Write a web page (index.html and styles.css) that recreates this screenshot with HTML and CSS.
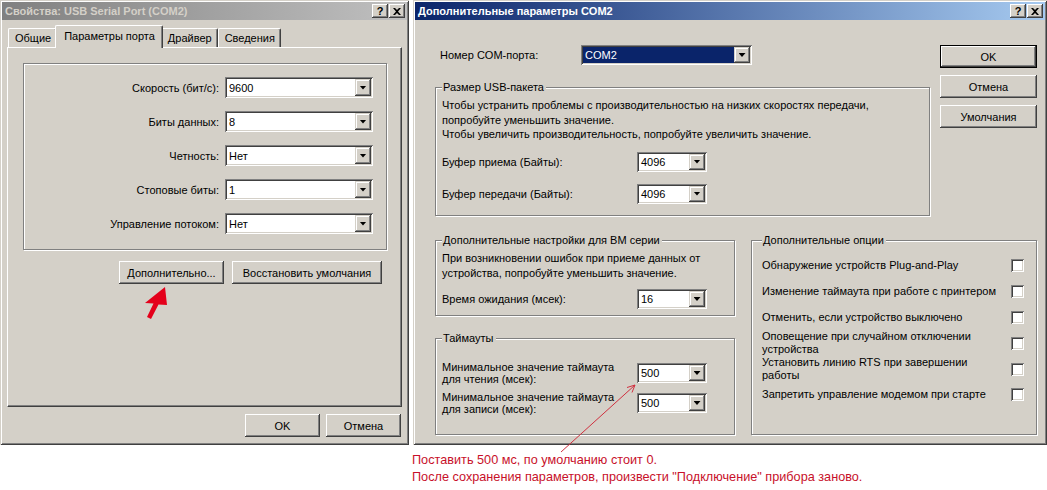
FILE: index.html
```html
<!DOCTYPE html>
<html lang="ru">
<head>
<meta charset="utf-8">
<title>USB Serial Port</title>
<link rel="stylesheet" href="styles.css">
</head>
<body>
<div class="desk">
  <div class="windows">
    <section class="win win-props">
      <div class="titlebar inactive">
        <span class="title">Свойства: USB Serial Port (COM2)</span>
        <span class="tbtns">
          <span class="tbtn">?</span>
          <span class="tbtn"><svg width="8" height="7" viewBox="0 0 8 7"><path d="M0 0h2l2 2 2-2h2L5 3.5 8 7H6L4 5 2 7H0l3-3.5z" fill="#000"/></svg></span>
        </span>
      </div>
      <div class="tabs">
        <div class="tab">Общие</div>
        <div class="tab active">Параметры порта</div>
        <div class="tab">Драйвер</div>
        <div class="tab">Сведения</div>
      </div>
      <div class="tabpanel">
        <div class="etched portgroup">
          <div class="prow"><span>Скорость (бит/с):</span><div class="combo c-port"><span class="val">9600</span><span class="drop"></span></div></div>
          <div class="prow"><span>Биты данных:</span><div class="combo c-port"><span class="val">8</span><span class="drop"></span></div></div>
          <div class="prow"><span>Четность:</span><div class="combo c-port"><span class="val">Нет</span><span class="drop"></span></div></div>
          <div class="prow"><span>Стоповые биты:</span><div class="combo c-port"><span class="val">1</span><span class="drop"></span></div></div>
          <div class="prow"><span>Управление потоком:</span><div class="combo c-port"><span class="val">Нет</span><span class="drop"></span></div></div>
        </div>
        <div class="panel-btns">
          <button class="btn b-more">Дополнительно...</button>
          <button class="btn b-restore">Восстановить умолчания</button>
        </div>
      </div>
      <div class="dlg-btns">
        <button class="btn b-dlg">OK</button>
        <button class="btn b-dlg">Отмена</button>
      </div>
    </section>

    <section class="win win-adv">
      <div class="titlebar active">
        <span class="title">Дополнительные параметры COM2</span>
        <span class="tbtns">
          <span class="tbtn">?</span>
          <span class="tbtn"><svg width="8" height="7" viewBox="0 0 8 7"><path d="M0 0h2l2 2 2-2h2L5 3.5 8 7H6L4 5 2 7H0l3-3.5z" fill="#000"/></svg></span>
        </span>
      </div>
      <div class="adv-body">
        <div class="adv-top">
          <div class="adv-main">
            <div class="com-row">
              <span class="com-lbl">Номер COM-порта:</span>
              <div class="combo c-com"><span class="val sel">COM2</span><span class="drop"></span></div>
            </div>
            <div class="etched group g-usb">
              <span class="legend">Размер USB-пакета</span>
              <p class="desc">Чтобы устранить проблемы с производительностью на низких скоростях передачи,<br>попробуйте уменьшить значение.<br>Чтобы увеличить производительность, попробуйте увеличить значение.</p>
              <div class="frow r-buf1"><span class="flbl">Буфер приема (Байты):</span><div class="combo c-small"><span class="val">4096</span><span class="drop"></span></div></div>
              <div class="frow r-buf2"><span class="flbl">Буфер передачи (Байты):</span><div class="combo c-small"><span class="val">4096</span><span class="drop"></span></div></div>
            </div>
          </div>
          <div class="side-btns">
            <button class="btn default">OK</button>
            <button class="btn">Отмена</button>
            <button class="btn">Умолчания</button>
          </div>
        </div>
        <div class="adv-bottom">
          <div class="col-a">
            <div class="etched group g-bm">
              <span class="legend">Дополнительные настройки для BM серии</span>
              <p class="desc">При возникновении ошибок при приеме данных от<br>устройства, попробуйте уменьшить значение.</p>
              <div class="frow r-wait"><span class="flbl">Время ожидания (мсек):</span><div class="combo c-small"><span class="val">16</span><span class="drop"></span></div></div>
            </div>
            <div class="etched group g-to">
              <span class="legend">Таймауты</span>
              <div class="frow r-to"><span class="flbl two">Минимальное значение таймаута<br>для чтения (мсек):</span><div class="combo c-small"><span class="val">500</span><span class="drop"></span></div></div>
              <div class="frow r-to"><span class="flbl two">Минимальное значение таймаута<br>для записи (мсек):</span><div class="combo c-small"><span class="val">500</span><span class="drop"></span></div></div>
            </div>
          </div>
          <div class="etched group g-opt">
            <span class="legend">Дополнительные опции</span>
            <div class="opts">
              <div class="opt"><span>Обнаружение устройств Plug-and-Play</span><span class="chk"></span></div>
              <div class="opt"><span>Изменение таймаута при работе с принтером</span><span class="chk"></span></div>
              <div class="opt"><span>Отменить, если устройство выключено</span><span class="chk"></span></div>
              <div class="opt"><span>Оповещение при случайном отключении<br>устройства</span><span class="chk"></span></div>
              <div class="opt"><span>Установить линию RTS при завершении<br>работы</span><span class="chk"></span></div>
              <div class="opt"><span>Запретить управление модемом при старте</span><span class="chk"></span></div>
            </div>
          </div>
        </div>
      </div>
    </section>
  </div>
  <div class="note">
    <p>Поставить 500 мс, по умолчанию стоит 0.</p>
    <p>После сохранения параметров, произвести "Подключение" прибора заново.</p>
  </div>
</div>
<svg class="annot" width="1047" height="490" viewBox="0 0 1047 490">
  <polygon points="165,287 167,305 158.5,304.5 151,319 147,317 153.5,303.5 145,303" fill="#e4001b"/>
  <path d="M561 452 L635 385 M627 387.5 L635 385 L632 392.5" stroke="#d0303f" stroke-width="1" fill="none"/>
</svg>
</body>
</html>
```

FILE: styles.css
```css
* { box-sizing: border-box; }

body {
  margin: 0;
  width: 1047px;
  height: 490px;
  overflow: hidden;
  position: relative;
  background: #fff;
  color: #000;
  font-family: "Liberation Sans", Arial, sans-serif;
  font-size: 11px;
}

p { margin: 0; }

.desk { display: flex; flex-direction: column; }

.windows { display: flex; gap: 4px; align-items: flex-start; }

.win {
  height: 445px;
  padding: 2px;
  background: #d4d0c8;
  display: flex;
  flex-direction: column;
  box-shadow: inset 1px 1px 0 #d4d0c8, inset -1px -1px 0 #404040,
              inset 2px 2px 0 #fff, inset -2px -2px 0 #808080;
}

.win-props {
  width: 409px;
  font-family: "Liberation Sans", Arial, sans-serif;
  font-size: 11px;
}

.win-adv { width: 634px; }

/* title bars */
.titlebar {
  height: 18px;
  flex: none;
  display: flex;
  align-items: center;
  justify-content: space-between;
  padding: 0 2px 0 3px;
  font-family: "Liberation Sans", Arial, sans-serif;
  font-size: 11px;
  font-weight: bold;
  white-space: nowrap;
}
.titlebar.inactive { background: linear-gradient(90deg, #808080, #c0c0c0); color: #d4d0c8; }
.titlebar.active { background: linear-gradient(90deg, #0a246a, #a6caf0); color: #fff; }

.tbtns { display: flex; gap: 1px; }
.tbtn {
  width: 16px;
  height: 14px;
  display: flex;
  align-items: center;
  justify-content: center;
  background: #d4d0c8;
  color: #000;
  font-size: 11px;
  font-weight: bold;
  box-shadow: inset -1px -1px 0 #404040, inset 1px 1px 0 #fff,
              inset -2px -2px 0 #808080, inset 2px 2px 0 #d4d0c8;
}

/* tabs */
.tabs {
  display: flex;
  align-items: flex-end;
  height: 22px;
  margin: 5px 5px 0 6px;
  position: relative;
  z-index: 1;
}
.tab {
  height: 19px;
  padding: 0 5px 0 6px;
  line-height: 18px;
  border-top: 1px solid #fff;
  border-left: 1px solid #fff;
  border-right: 1px solid #404040;
  border-radius: 2px 2px 0 0;
  box-shadow: inset -1px 0 0 #808080;
  background: #d4d0c8;
  white-space: nowrap;
}
.tab.active {
  height: 23px;
  margin: 0 -2px -1px;
  padding: 0 7px 0 8px;
  line-height: 20px;
  position: relative;
  z-index: 2;
}

.tabpanel {
  height: 360px;
  flex: none;
  margin: 0 5px;
  padding: 15px 14px 0 15px;
  border-top: 1px solid #fff;
  border-left: 1px solid #fff;
  border-right: 1px solid #404040;
  border-bottom: 1px solid #404040;
  box-shadow: inset -1px -1px 0 #808080;
}

.etched {
  border: 1px solid #808080;
  box-shadow: inset 1px 1px 0 #fff, 1px 1px 0 #fff;
}

.portgroup {
  height: 187px;
  padding: 13px 13px 0 0;
  display: flex;
  flex-direction: column;
  gap: 13px;
}
.prow {
  height: 21px;
  display: flex;
  align-items: center;
  justify-content: flex-end;
  gap: 6px;
  white-space: nowrap;
}

.panel-btns {
  display: flex;
  justify-content: flex-end;
  gap: 8px;
  margin-top: 11px;
  padding-right: 5px;
}
.b-more { width: 105px; }
.b-restore { width: 150px; }

.dlg-btns {
  display: flex;
  justify-content: flex-end;
  gap: 6px;
  margin-top: 7px;
  padding-right: 6px;
}
.b-dlg { width: 75px; }

/* controls */
.btn {
  height: 23px;
  padding: 0;
  border: 0;
  background: #d4d0c8;
  color: #000;
  font: inherit;
  box-shadow: inset -1px -1px 0 #404040, inset 1px 1px 0 #fff,
              inset -2px -2px 0 #808080, inset 2px 2px 0 #d4d0c8;
  white-space: nowrap;
}
.btn.default {
  border: 1px solid #000;
}

.combo {
  height: 21px;
  display: flex;
  align-items: stretch;
  padding: 2px;
  background: #fff;
  box-shadow: inset 1px 1px 0 #808080, inset -1px -1px 0 #fff,
              inset 2px 2px 0 #404040, inset -2px -2px 0 #d4d0c8;
}
.combo .val {
  flex: 1;
  padding-left: 2px;
  display: flex;
  align-items: center;
  white-space: nowrap;
}
.combo .val.sel { background: #0a246a; color: #fff; }
.drop {
  width: 16px;
  flex: none;
  display: flex;
  align-items: center;
  justify-content: center;
  background: #d4d0c8;
  box-shadow: inset -1px -1px 0 #404040, inset 1px 1px 0 #d4d0c8,
              inset -2px -2px 0 #808080, inset 2px 2px 0 #fff;
}
.drop::after {
  content: "";
  width: 7px;
  height: 4px;
  background: #000;
  clip-path: polygon(0 0, 100% 0, 50% 100%);
}
.c-port { width: 148px; }
.c-com { width: 171px; height: 20px; }
.c-small { width: 70px; height: 20px; }

.chk {
  width: 13px;
  height: 13px;
  flex: none;
  background: #fff;
  box-shadow: inset 1px 1px 0 #808080, inset -1px -1px 0 #fff,
              inset 2px 2px 0 #404040, inset -2px -2px 0 #d4d0c8;
}

/* advanced dialog */
.adv-body {
  flex: 1;
  padding: 25px 8px 0 20px;
  display: flex;
  flex-direction: column;
}
.adv-top { display: flex; }
.adv-main { width: 495px; }
.side-btns {
  width: 97px;
  margin-left: 10px;
  display: flex;
  flex-direction: column;
  gap: 7px;
}

.com-row { display: flex; align-items: center; height: 20px; }
.com-lbl { width: 146px; padding-left: 5px; }

.group {
  display: flex;
  flex-direction: column;
  padding: 0 8px 0 6px;
}
.legend {
  align-self: flex-start;
  margin: -7px 0 0 0;
  padding: 0 2px 0 1px;
  line-height: 13px;
  background: #d4d0c8;
}
.desc { line-height: 14.5px; }

.g-usb { margin-top: 22px; height: 129px; }
.g-usb .desc { margin-top: 4px; }
.frow { display: flex; align-items: center; }
.flbl { width: 195px; }
.r-buf1 { margin-top: 10px; height: 20px; }
.r-buf2 { margin-top: 12px; height: 20px; }

.adv-bottom { display: flex; gap: 16px; margin-top: 24px; }
.col-a { width: 300px; display: flex; flex-direction: column; }
.g-bm { height: 76px; }
.g-bm .desc { margin-top: 4px; }
.r-wait { margin-top: 9px; height: 20px; }
.g-to { margin-top: 22px; height: 97px; }
.flbl.two { line-height: 12.5px; }
.r-to { height: 26px; }
.r-to:first-of-type { margin-top: 15px; }
.r-to + .r-to { margin-top: 4px; }

.g-opt { width: 286px; padding: 0 12px 0 10px; }
.opts { margin-top: 6px; display: flex; flex-direction: column; }
.opt {
  height: 25.8px;
  display: flex;
  align-items: center;
  justify-content: space-between;
  line-height: 13px;
}

/* annotation */
.note {
  margin-top: 7px;
  padding-left: 412px;
  color: #c8102a;
  font-family: "Liberation Sans", Arial, sans-serif;
  font-size: 12.7px;
  line-height: 16.5px;
  white-space: nowrap;
}

.annot {
  position: absolute;
  left: 0;
  top: 0;
  pointer-events: none;
}
```
